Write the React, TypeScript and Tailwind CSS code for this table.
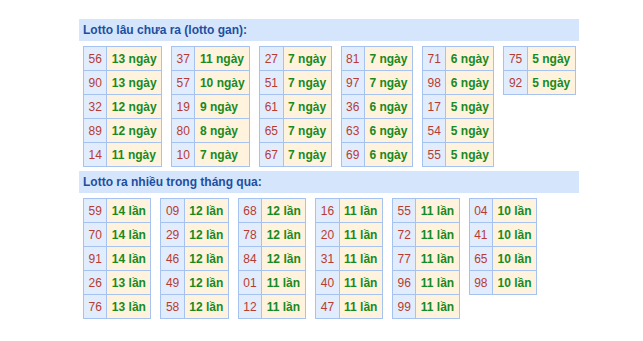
type Row = [string, string];

const gan: Row[][] = [
  [["56", "13"], ["90", "13"], ["32", "12"], ["89", "12"], ["14", "11"]],
  [["37", "11"], ["57", "10"], ["19", "9"], ["80", "8"], ["10", "7"]],
  [["27", "7"], ["51", "7"], ["61", "7"], ["65", "7"], ["67", "7"]],
  [["81", "7"], ["97", "7"], ["36", "6"], ["63", "6"], ["69", "6"]],
  [["71", "6"], ["98", "6"], ["17", "5"], ["54", "5"], ["55", "5"]],
  [["75", "5"], ["92", "5"]],
];

const nhieu: Row[][] = [
  [["59", "14"], ["70", "14"], ["91", "14"], ["26", "13"], ["76", "13"]],
  [["09", "12"], ["29", "12"], ["46", "12"], ["49", "12"], ["58", "12"]],
  [["68", "12"], ["78", "12"], ["84", "12"], ["01", "11"], ["12", "11"]],
  [["16", "11"], ["20", "11"], ["31", "11"], ["40", "11"], ["47", "11"]],
  [["55", "11"], ["72", "11"], ["77", "11"], ["96", "11"], ["99", "11"]],
  [["04", "10"], ["41", "10"], ["65", "10"], ["98", "10"]],
];

function LottoTable({ rows, unit }: { rows: Row[]; unit: string }) {
  return (
    <table className="shrink-0 self-start border-collapse whitespace-nowrap">
      <tbody>
        {rows.map(([num, count], idx) => (
          <tr key={idx} className="h-[24px]">
            <td className="border border-[#a6c2f0] bg-[#e1ecfd] px-[4.5px] text-[#b63c32]">
              {num}
            </td>
            <td className="border border-[#a6c2f0] bg-[#fff3dd] px-[4.5px] font-bold text-[#188a22]">
              {count} {unit}
            </td>
          </tr>
        ))}
      </tbody>
    </table>
  );
}

function Section({ title, tables, unit }: { title: string; tables: Row[][]; unit: string }) {
  return (
    <div>
      <div className="flex h-[22px] items-center bg-[#d5e6fc] px-[4px] text-[12px] font-bold text-[#1d4fa0]">
        {title}
      </div>
      <div className="mt-[5px] flex gap-[9px] pl-[4px]">
        {tables.map((rows, idx) => (
          <LottoTable key={idx} rows={rows} unit={unit} />
        ))}
      </div>
    </div>
  );
}

export default function App() {
  return (
    <div
      className="min-h-[341px] bg-white pl-[79px] pt-[19px] text-[12px] leading-none"
      style={{ fontFamily: '"Liberation Sans", Arial, sans-serif' }}
    >
      <div className="flex w-[500px] flex-col gap-[4px]">
        <Section title="Lotto lâu chưa ra (lotto gan):" tables={gan} unit="ngày" />
        <Section title="Lotto ra nhiều trong tháng qua:" tables={nhieu} unit="lần" />
      </div>
    </div>
  );
}
